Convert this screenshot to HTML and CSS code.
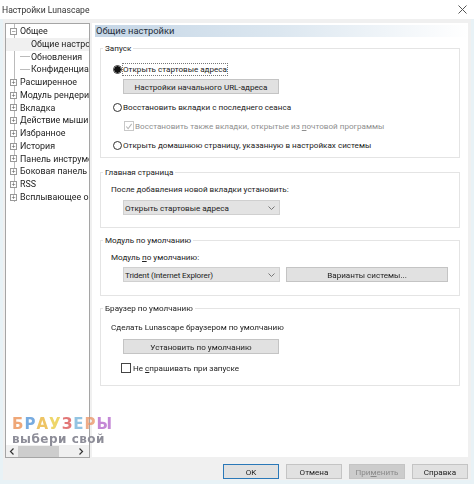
FILE: index.html
```html
<!DOCTYPE html>
<html lang="ru">
<head>
    <meta charset="UTF-8">
    <meta name="viewport" content="width=device-width, initial-scale=1.0">
    <title>Настройки Lunascape</title>
    <link rel="stylesheet" href="styles.css">
</head>
<body>
    <div class="window">
        <div class="titlebar">
            <span>Настройки Lunascape</span>
            <svg class="close" width="9" height="9" viewBox="0 0 9 9"><path d="M.5.5l8 8M8.500.5l-8 8" stroke="#555" fill="none"/></svg>
        </div>
        <div class="content">
            <div class="tree">
                <ul class="tree-list">
                    <li><i class="exp">−</i>Общее</li>
                    <li class="leaf selected">Общие настройки</li>
                    <li class="leaf">Обновления</li>
                    <li class="leaf">Конфиденциальность</li>
                    <li><i class="exp">+</i>Расширенное</li>
                    <li><i class="exp">+</i>Модуль рендеринга</li>
                    <li><i class="exp">+</i>Вкладка</li>
                    <li><i class="exp">+</i>Действие мыши</li>
                    <li><i class="exp">+</i>Избранное</li>
                    <li><i class="exp">+</i>История</li>
                    <li><i class="exp">+</i>Панель инструментов</li>
                    <li><i class="exp">+</i>Боковая панель</li>
                    <li><i class="exp">+</i>RSS</li>
                    <li><i class="exp">+</i>Всплывающее окно</li>
                </ul>
                <div class="hscroll">
                    <svg width="6" height="7" viewBox="0 0 6 7"><path d="M4.500.5l-3 3 3 3" stroke="#333" stroke-width="1.200" fill="none"/></svg>
                    <div class="thumb"></div>
                    <svg width="6" height="7" viewBox="0 0 6 7"><path d="M1.500.5l3 3-3 3" stroke="#333" stroke-width="1.200" fill="none"/></svg>
                </div>
            </div>
            <div class="panel">
                <div class="panel-head">Общие настройки</div>
                <div class="groups">
                    <fieldset class="group group-start">
                        <legend>Запуск</legend>
                        <label class="opt"><i class="radio on"></i><span class="focused">Открыть стартовые адреса</span></label>
                        <button class="btn btn-url">Настройки начального URL-адреса</button>
                        <label class="opt opt-a"><i class="radio"></i><span>Восстановить вкладки с последнего сеанса</span></label>
                        <label class="opt opt-b disabled"><i class="check checked">
                            <svg width="9" height="9" viewBox="0 0 9 9"><path d="M1.500 4.500l2 2.500 4-5.500" stroke="#b5b5b5" stroke-width="1.200" fill="none"/></svg>
                        </i><span>Восстановить также вкладки, открытые из <u>п</u>очтовой программы</span></label>
                        <label class="opt opt-b"><i class="radio"></i><span>Открыть домашнюю страницу, указанную в настройках системы</span></label>
                    </fieldset>
                    <fieldset class="group group-home">
                        <legend>Главная страница</legend>
                        <div class="text">После добавления новой вкладки установить:</div>
                        <div class="combo combo-home"><span>Открыть стартовые адреса</span><svg width="7" height="4" viewBox="0 0 7 4"><path d="M.5.5l3 3 3-3" stroke="#777" fill="none"/></svg></div>
                    </fieldset>
                    <fieldset class="group group-engine">
                        <legend>Модуль по умолчанию</legend>
                        <div class="text">Модуль <u>п</u>о умолчанию:</div>
                        <div class="engine-row">
                            <div class="combo"><span class="engine-name">Trident (Internet Explorer)</span><svg width="7" height="4" viewBox="0 0 7 4"><path d="M.5.5l3 3 3-3" stroke="#777" fill="none"/></svg></div>
                            <button class="btn btn-variants">Варианты системы...</button>
                        </div>
                    </fieldset>
                    <fieldset class="group group-default">
                        <legend>Браузер по умолчанию</legend>
                        <div class="text">Сделать Lunascape браузером по умолчанию</div>
                        <button class="btn btn-install">Установить по умолчанию</button>
                        <label class="opt opt-ask"><i class="check"></i><span>Не <u>с</u>прашивать при запуске</span></label>
                    </fieldset>
                </div>
            </div>
        </div>
        <div class="footer">
            <button class="btn btn-foot btn-ok">OK</button>
            <button class="btn btn-foot">Отмена</button>
            <button class="btn btn-foot btn-off">При<u>м</u>енить</button>
            <button class="btn btn-foot">Справка</button>
        </div>
    </div>
    <div class="watermark">
        <div class="wm-title"><span class="c1">Б</span><span class="c2">Р</span><span class="c3">А</span><span class="c4">У</span><span class="c5">З</span><span class="c6">Е</span><span class="c7">Р</span><span class="c8">Ы</span></div>
        <div class="wm-sub">выбери свой</div>
    </div>
</body>
</html>
```

FILE: styles.css
```css
* {
    box-sizing: border-box;
}
body {
    margin: 0;
    width: 474px;
    height: 484px;
    overflow: hidden;
    background: #e8f2f6;
    font-family: Roboto, 'Noto Sans', Arial, sans-serif;
    font-size: 8.1px;
    color: #222;
    position: relative;
    filter: blur(.3px);
}
.window {
    margin: 0 3px;
    height: 480px;
    background: #f0f0f0;
    display: flex;
    flex-direction: column;
}
.titlebar {
    height: 19px;
    margin: 0 -3px;
    padding: 0 7px 0 2px;
    background: #fff;
    display: flex;
    align-items: center;
    justify-content: space-between;
    font-size: 8.600px;
    color: #333;
}
.content {
    display: flex;
    gap: 2px;
    height: 439px;
    padding: 4px 3px 0 2px;
}

/* tree */
.tree {
    width: 85px;
    height: 435px;
    flex: none;
    background: #fff;
    border: 1px solid #a5a5a5;
    display: flex;
    flex-direction: column;
    justify-content: space-between;
    overflow: hidden;
}
.tree-list {
    list-style: none;
    margin: 0;
    padding: 1px 0 0 0;
    font-size: 8.900px;
    white-space: nowrap;
    overflow: hidden;
    background: linear-gradient(#bbb, #bbb) 8px 0 / 1px 178px no-repeat;
}
.tree-list li {
    height: 12.75px;
    line-height: 12.75px;
    padding-left: 14px;
    display: flex;
    align-items: center;
}
.tree-list .leaf {
    padding-left: 25px;
    background: linear-gradient(#bbb, #bbb) 14px 50% / 10px 1px no-repeat;
}
.tree-list .selected {
    background-color: #f0f0f0;
    background-image: none;
}
.exp {
    width: 7px;
    height: 7px;
    margin: 0 3px 0 -10px;
    border: 1px solid #999;
    background: #fff;
    font-style: normal;
    font-size: 7px;
    line-height: 5px;
    text-align: center;
    color: #555;
    flex: none;
    font-family: 'Liberation Sans', sans-serif;
}
.hscroll {
    height: 12px;
    flex: none;
    display: flex;
    align-items: center;
    justify-content: space-between;
    padding: 0 5px 0 3px;
    background: #f0f0f0;
}
.thumb {
    width: 41px;
    height: 11px;
    margin: 0 auto 0 3px;
    background: #cdcdcd;
}

/* right panel */
.panel {
    flex: 1;
    height: 434px;
    background: #fff;
    padding-top: 2px;
    padding-left: 3px;
}
.panel-head {
    height: 12px;
    line-height: 12px;
    padding-left: 1px;
    font-size: 9.400px;
    color: #1f2d3a;
    background: linear-gradient(90deg, #c5d6e6 0%, #dce7f0 50%, #fff 100%);
}
.groups {
    padding: 5px 8px 0 5px;
}
.group {
    margin: 6px 0 0 0;
    border: 1px solid #e4e4e4;
    min-width: 0;
    padding: 0 10px;
}
.group legend {
    margin-left: -8px;
    padding: 0 2px;
    height: 12px;
    line-height: 12px;
}
.group-start {
    margin-top: 0;
    padding-top: 8px;
    padding-bottom: 5px;
}
.group-home {
    margin-top: 8px;
    padding-top: 5px;
    padding-bottom: 12px;
}
.group-engine {
    padding-top: 5px;
    padding-bottom: 13px;
}
.group-default {
    padding-top: 7px;
    padding-bottom: 10px;
}
.text {
    height: 12px;
    line-height: 12px;
}
.opt {
    display: flex;
    align-items: center;
    height: 14px;
    white-space: nowrap;
}
.opt-a {
    margin-top: 6px;
}
.opt-b {
    margin-top: 5px;
}
.opt-ask {
    margin-top: 7px;
    margin-left: 10px;
}
.disabled {
    color: #8f8f8f;
}
.disabled .check {
    margin: 0 1px 0 13px;
    border-color: #c8c8c8;
}
.radio {
    width: 9px;
    height: 9px;
    margin: 0 1px 0 2px;
    border: 1px solid #333;
    border-radius: 50%;
    background: #fff;
    flex: none;
}
.radio.on {
    background: radial-gradient(circle, #111 0 3px, #fff 3.500px);
}
.focused {
    outline: 1px dotted #777;
    line-height: 11px;
}
.check {
    width: 10px;
    height: 10px;
    margin-right: 2px;
    border: 1px solid #444;
    background: #fff;
    flex: none;
    display: flex;
}
.btn {
    display: block;
    height: 15px;
    padding: 0;
    border: 1px solid #c4c4c4;
    background: #e1e1e1;
    font: inherit;
    color: inherit;
}
.btn-url {
    width: 156px;
    margin: 3px 0 0 12px;
}
.btn-install {
    width: 156px;
    margin: 6px 0 0 12px;
}
.combo {
    width: 157px;
    height: 15px;
    padding: 0 4px 0 1px;
    margin-left: 12px;
    background: #e3e3e3;
    border: 1px solid #d0d0d0;
    display: flex;
    align-items: center;
    justify-content: space-between;
    flex: none;
}
.combo-home {
    margin-top: 5px;
}
.engine-name {
    letter-spacing: -.15px;
}
.engine-row {
    display: flex;
    gap: 6px;
    margin-top: 4px;
}
.btn-variants {
    width: 162px;
}

/* bottom buttons */
.footer {
    flex: 1;
    display: flex;
    justify-content: flex-end;
    gap: 7px;
    padding: 6px 3px 0 0;
}
.btn-foot {
    width: 56px;
}
.btn-ok {
    border-color: #2a78b8;
}
.btn-off {
    background: #cccccc;
    color: #8a8a8a;
}

/* site logo over the window */
.watermark {
    position: absolute;
    left: 12px;
    top: 416px;
    font-family: 'DejaVu Sans', sans-serif;
    font-weight: bold;
    white-space: nowrap;
}
.wm-title {
    height: 16px;
    line-height: 16px;
    font-size: 15px;
    letter-spacing: 1px;
    opacity: .75;
}
.wm-sub {
    height: 15px;
    line-height: 15px;
    font-size: 12px;
    letter-spacing: .5px;
    color: #8d8d98;
}
.c1 { color: #ea8a4a; }
.c2 { color: #4a8fd6; }
.c3 { color: #e8b030; }
.c4 { color: #e8c838; }
.c5 { color: #d84a4a; }
.c6 { color: #6fb0d8; }
.c7 { color: #e89060; }
.c8 { color: #b060c8; }
```
